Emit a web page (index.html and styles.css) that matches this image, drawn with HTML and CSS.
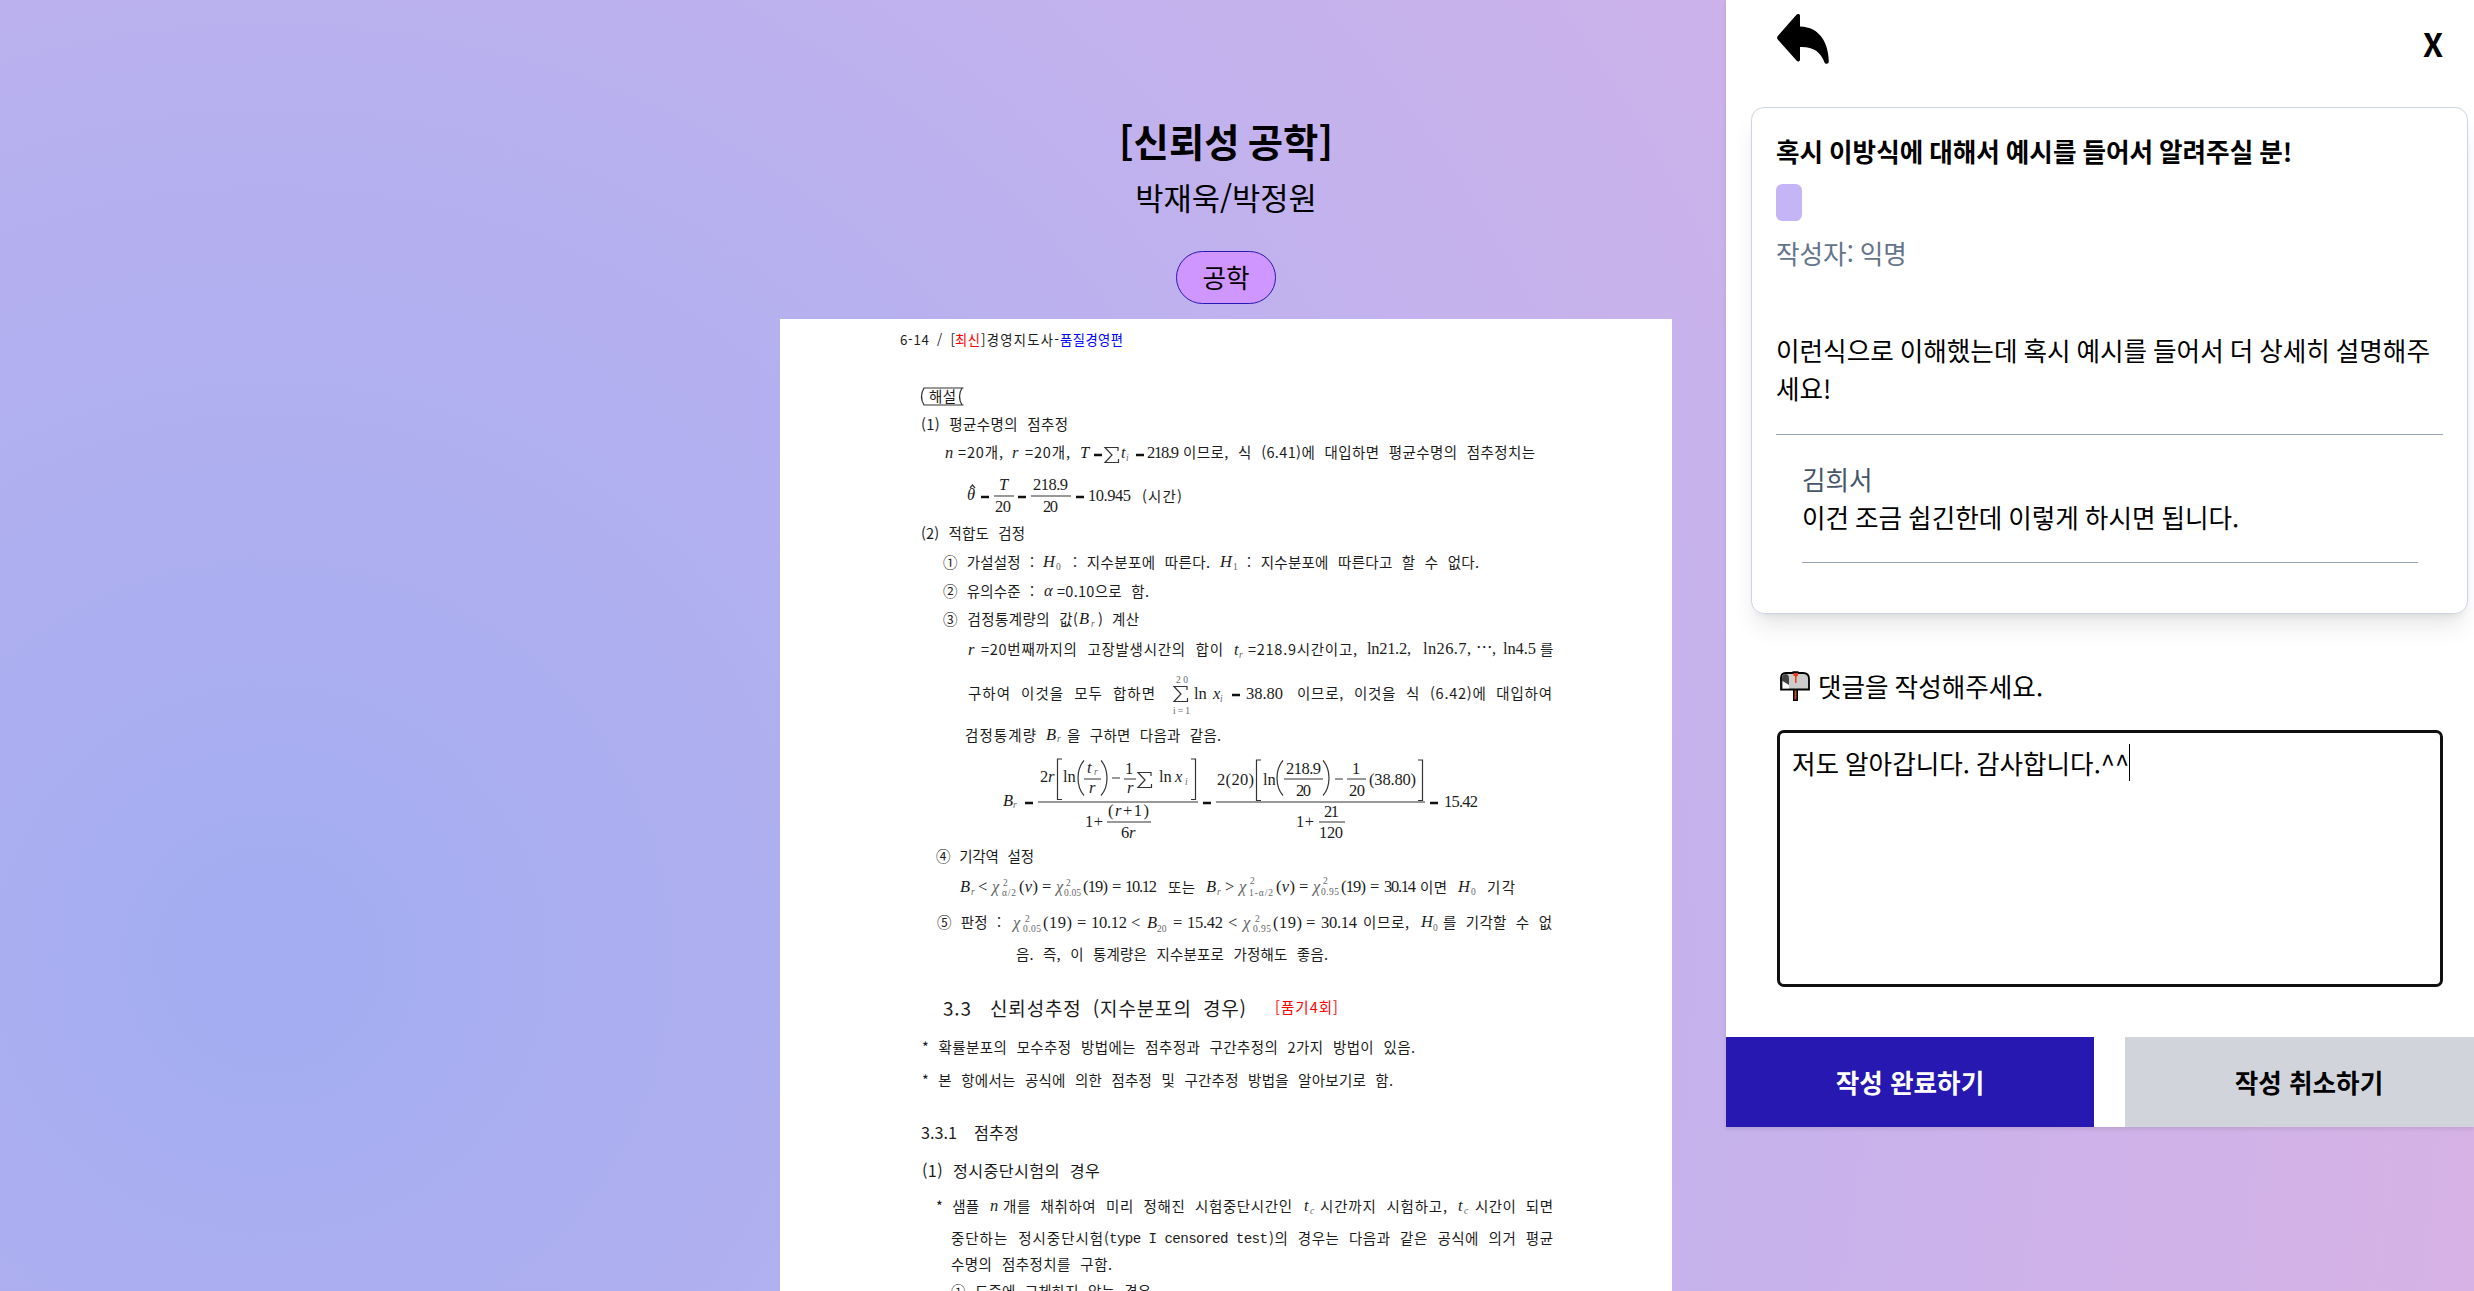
FILE: index.html
```html
<!DOCTYPE html>
<html lang="ko">
<head>
<meta charset="utf-8">
<title>신뢰성 공학</title>
<link rel="stylesheet" href="styles.css">
</head>
<body>
<main class="book">
  <h1 class="book-title">[신뢰성 공학]</h1>
  <p class="book-authors">박재욱/박정원</p>
  <span class="chip">공학</span>
  <svg class="sheet" viewBox="780 320 892 971" role="img" aria-label="6-14">
    <defs>
      <path id="sum" d="M13 3.5V0H0L7 7.5L0 15H13.500V11.500" />
      <path id="brl" d="M5 .5H.5V41H5" />
      <path id="brr" d="M0 .5H4.500V41H0" />
      <path id="pal" d="M7 0C-1 9 -1 26 7 35" />
      <path id="par" d="M0 0C8 9 8 26 0 35" />
    </defs>
    <g class="ko small">
      <text x="900" y="345" textLength="55">6-14 / [</text>
      <text class="red" x="955" y="345" textLength="25">최신</text>
      <text x="981" y="345" textLength="78">]경영지도사-</text>
      <text class="blue" x="1060" y="345" textLength="63">품질경영편</text>
    </g>
    <path class="rule" d="M963.500 388.500H924Q919 397 924 405.500H963.500M962 388.500Q957 397 962 405.500" />
    <g class="ko">
      <text x="929" y="402" textLength="27">해설</text>
      <text x="921" y="430" textLength="147">(1) 평균수명의 점추정</text>
      <text x="958" y="458" textLength="45">=20개,</text>
      <text x="1025" y="458" textLength="45">=20개,</text>
      <text x="1183" y="458" textLength="352">이므로, 식 (6.41)에 대입하면 평균수명의 점추정치는</text>
      <text x="1142" y="502" textLength="40">(시간)</text>
      <text x="921" y="539" textLength="104">(2) 적합도 검정</text>
      <text x="943" y="568" textLength="91">① 가설설정 :</text>
      <text x="1073" y="568" textLength="137">: 지수분포에 따른다.</text>
      <text x="1247" y="568" textLength="232">: 지수분포에 따른다고 할 수 없다.</text>
      <text x="943" y="597" textLength="91">② 유의수준 :</text>
      <text x="1057" y="597" textLength="92">=0.10으로 함.</text>
      <text x="943" y="625" textLength="135">③ 검정통계량의 값(</text>
      <text x="1098" y="625">)</text>
      <text x="1112" y="625" textLength="27">계산</text>
      <text x="981" y="655" textLength="242">=20번째까지의 고장발생시간의 합이</text>
      <text x="1248" y="655" textLength="109">=218.9시간이고,</text>
      <text x="1540" y="655">를</text>
      <text x="968" y="699" textLength="187">구하여 이것을 모두 합하면</text>
      <text x="1297" y="699" textLength="255">이므로, 이것을 식 (6.42)에 대입하여</text>
      <text x="965" y="741" textLength="71">검정통계량</text>
      <text x="1067" y="741" textLength="154">을 구하면 다음과 같음.</text>
      <text x="936" y="862" textLength="98">④ 기각역 설정</text>
      <text x="1168" y="893" textLength="27">또는</text>
      <text x="1420" y="893" textLength="27">이면</text>
      <text x="1487" y="893" textLength="28">기각</text>
      <text x="937" y="928" textLength="64">⑤ 판정 :</text>
      <text x="1363" y="928" textLength="46">이므로,</text>
      <text x="1443" y="928" textLength="109">를 기각할 수 없</text>
      <text x="1016" y="960" textLength="312">음. 즉, 이 통계량은 지수분포로 가정해도 좋음.</text>
      <text class="red" x="1275" y="1013" textLength="63">[품기4회]</text>
      <text x="922" y="1053" textLength="493">* 확률분포의 모수추정 방법에는 점추정과 구간추정의 2가지 방법이 있음.</text>
      <text x="922" y="1086" textLength="471">* 본 항에서는 공식에 의한 점추정 및 구간추정 방법을 알아보기로 함.</text>
      <text x="936" y="1212" textLength="43">* 샘플</text>
      <text x="1003" y="1212" textLength="289">개를 채취하여 미리 정해진 시험중단시간인</text>
      <text x="1320" y="1212" textLength="127">시간까지 시험하고,</text>
      <text x="1475" y="1212" textLength="78">시간이 되면</text>
      <text x="951" y="1244" textLength="158">중단하는 정시중단시험(</text>
      <text class="mono" x="1109" y="1243" textLength="159">type I censored test</text>
      <text x="1269" y="1244" textLength="284">)의 경우는 다음과 같은 공식에 의거 평균</text>
      <text x="951" y="1270" textLength="161">수명의 점추정치를 구함.</text>
      <text x="951" y="1297" textLength="200">① 도중에 교체하지 않는 경우</text>
    </g>
    <g class="ko section">
      <text x="943" y="1016" textLength="28">3.3</text>
      <text x="990" y="1016" textLength="256">신뢰성추정 (지수분포의 경우)</text>
    </g>
    <g class="ko sub-section">
      <text x="921" y="1139" textLength="36">3.3.1</text>
      <text x="974" y="1139" textLength="45">점추정</text>
      <text x="922" y="1177" textLength="178">(1) 정시중단시험의 경우</text>
    </g>
    <g class="math it">
      <text x="945" y="458" textLength="10">n</text>
      <text x="1012" y="458">r</text>
      <text x="1080" y="458">T</text>
      <text x="1121" y="458">t</text>
      <text x="967" y="500">θ</text>
      <text x="999" y="490">T</text>
      <text x="1043" y="567">H</text>
      <text x="1220" y="567">H</text>
      <text x="1044" y="596">α</text>
      <text x="1079" y="624">B</text>
      <text x="968" y="655">r</text>
      <text x="1234" y="655">t</text>
      <text x="1213" y="699">x</text>
      <text x="1046" y="740">B</text>
      <text x="1003" y="806">B</text>
      <text x="1048" y="782">r</text>
      <text x="1087" y="773">t</text>
      <text x="1089" y="793">r</text>
      <text x="1127" y="793">r</text>
      <text x="1175" y="782">x</text>
      <text x="1129" y="838">r</text>
      <text x="960" y="892">B</text>
      <text x="1206" y="892">B</text>
      <text x="1458" y="892">H</text>
      <text x="1147" y="928">B</text>
      <text x="1421" y="927">H</text>
      <text x="990" y="1211">n</text>
      <text x="1304" y="1211">t</text>
      <text x="1458" y="1211">t</text>
      <text class="chi" x="992" y="892">χ</text>
      <text class="chi" x="1056" y="892">χ</text>
      <text class="chi" x="1239" y="892">χ</text>
      <text class="chi" x="1313" y="892">χ</text>
      <text class="chi" x="1013" y="928">χ</text>
      <text class="chi" x="1243" y="928">χ</text>
    </g>
    <g class="math">
      <text x="1147" y="458" textLength="32">218.9</text>
      <text x="995" y="512" textLength="16">20</text>
      <text x="1033" y="490" textLength="35">218.9</text>
      <text x="1043" y="512" textLength="15">20</text>
      <text x="1088" y="501" textLength="43">10.945</text>
      <text x="1367" y="654" textLength="44">ln21.2,</text>
      <text x="1423" y="654" textLength="48">ln26.7,</text>
      <text x="1476" y="654" textLength="20">⋯,</text>
      <text x="1503" y="654" textLength="33">ln4.5</text>
      <text x="1194" y="699">ln</text>
      <text x="1246" y="699" textLength="37">38.80</text>
      <text x="1040" y="782">2</text>
      <text x="1063" y="782">ln</text>
      <text x="1125" y="774">1</text>
      <text x="1159" y="782">ln</text>
      <text x="1085" y="827" textLength="18">1+</text>
      <text x="1108" y="816" textLength="41">(<tspan class="it">r</tspan>+1)</text>
      <text x="1121" y="838">6</text>
      <text x="1217" y="785" textLength="37">2(20)</text>
      <text x="1263" y="785">ln</text>
      <text x="1286" y="774" textLength="35">218.9</text>
      <text x="1296" y="796" textLength="15">20</text>
      <text x="1352" y="774">1</text>
      <text x="1349" y="796" textLength="16">20</text>
      <text x="1369" y="785" textLength="47">(38.80)</text>
      <text x="1444" y="807" textLength="34">15.42</text>
      <text x="1296" y="827" textLength="18">1+</text>
      <text x="1324" y="817" textLength="15">21</text>
      <text x="1319" y="838" textLength="24">120</text>
      <text x="978" y="892">&lt;</text>
      <text x="1019" y="892" textLength="19">(<tspan class="it">ν</tspan>)</text>
      <text x="1042" y="892">=</text>
      <text x="1083" y="892" textLength="25">(19)</text>
      <text x="1112" y="892">=</text>
      <text x="1125" y="892" textLength="32">10.12</text>
      <text x="1225" y="892">&gt;</text>
      <text x="1276" y="892" textLength="19">(<tspan class="it">ν</tspan>)</text>
      <text x="1299" y="892">=</text>
      <text x="1341" y="892" textLength="25">(19)</text>
      <text x="1370" y="892">=</text>
      <text x="1384" y="892" textLength="32">30.14</text>
      <text x="1043" y="928" textLength="29">(19)</text>
      <text x="1077" y="928">=</text>
      <text x="1091" y="928" textLength="36">10.12</text>
      <text x="1131" y="928">&lt;</text>
      <text x="1173" y="928">=</text>
      <text x="1187" y="928" textLength="36">15.42</text>
      <text x="1228" y="928">&lt;</text>
      <text x="1273" y="928" textLength="29">(19)</text>
      <text x="1306" y="928">=</text>
      <text x="1321" y="928" textLength="36">30.14</text>
    </g>
    <g class="math script">
      <text class="it" x="1126" y="461">i</text>
      <text x="1056" y="570">0</text>
      <text x="1233" y="570">1</text>
      <text class="it" x="1091" y="627">r</text>
      <text class="it" x="1239" y="658">r</text>
      <text x="1176" y="683" textLength="12">20</text>
      <text x="1173" y="714" textLength="17">i=1</text>
      <text class="it" x="1220" y="702">i</text>
      <text class="it" x="1057" y="742">r</text>
      <text class="it" x="1013" y="808">r</text>
      <text class="it" x="1094" y="775">r</text>
      <text class="it" x="1185" y="785">i</text>
      <text class="it" x="971" y="895">r</text>
      <text x="1003" y="886">2</text>
      <text x="1002" y="896" textLength="14">α/2</text>
      <text x="1066" y="886">2</text>
      <text x="1064" y="896" textLength="17">0.05</text>
      <text class="it" x="1217" y="895">r</text>
      <text x="1250" y="884">2</text>
      <text x="1249" y="896" textLength="24">1-α/2</text>
      <text x="1323" y="884">2</text>
      <text x="1321" y="895" textLength="18">0.95</text>
      <text x="1471" y="895">0</text>
      <text x="1025" y="922">2</text>
      <text x="1023" y="932" textLength="18">0.05</text>
      <text x="1157" y="932">20</text>
      <text x="1255" y="922">2</text>
      <text x="1253" y="932" textLength="18">0.95</text>
      <text x="1433" y="931">0</text>
      <text class="it" x="1310" y="1214">c</text>
      <text class="it" x="1464" y="1214">c</text>
    </g>
    <g class="thick">
      <path d="M1094 455.500h8M1136 455.500h8M981 497.500h8M1018 497.500h8M1076 497.500h8M1232 695.500h8M1025 803.500h8M1203 803.500h8M1430 803.500h8" />
    </g>
    <g class="rule">
      <path d="M970 488.500l2.500 -3l2.500 3" />
      <path d="M994 496.500h20M1031 496.500h40M1084 779.500h17M1124 779.500h12M1107 822.500h44M1284 779.500h39M1347 779.500h19M1319 822.500h26M1112 778.500h8M1335 779.500h8M1038 802.500h160M1216 802.500h209" />
      <use href="#sum" x="1105" y="448" />
      <use href="#sum" x="1174" y="687" />
      <use href="#sum" x="1138" y="773" />
      <use href="#brl" x="1057" y="759" />
      <use href="#brr" x="1191" y="759" />
      <use href="#brl" x="1256" y="760" />
      <use href="#brr" x="1418" y="760" />
      <use href="#pal" x="1077" y="761" />
      <use href="#par" x="1101" y="761" />
      <use href="#pal" x="1276" y="761" />
      <use href="#par" x="1323" y="761" />
    </g>
  </svg>
</main>

<aside class="panel">
  <header class="panel-head">
    <button class="icon-button" aria-label="뒤로">
      <svg class="back" viewBox="0 0 52 50"><path d="M23 1.800V12.500C43 13 51.500 29 51.800 47.500C51.800 50 48.500 50.500 47.500 48.500C43.500 37.500 36 32.500 23 33V45.500C23 47.600 21 48.300 19.700 46.800L.8 25.500C-.2 24.300 -.2 23.100 .8 21.900L19.700 .6C21 -.7 23 0 23 1.800Z" /></svg>
    </button>
    <button class="close">X</button>
  </header>
  <article class="card">
    <h2 class="card-title">혹시 이방식에 대해서 예시를 들어서 알려주실 분!</h2>
    <span class="badge"></span>
    <p class="author">작성자: 익명</p>
    <p class="content">이런식으로 이해했는데 혹시 예시를 들어서 더 상세히 설명해주세요!</p>
    <section class="reply">
      <p class="reply-name">김희서</p>
      <p>이건 조금 쉽긴한데 이렇게 하시면 됩니다.</p>
    </section>
  </article>
  <div class="write">
    <p class="write-label">
      <svg class="mailbox" viewBox="0 0 30 31"><path d="M15.500 18V30" stroke="#000" stroke-width="5" /><path d="M15.500 18V28.500" stroke="#b5532a" stroke-width="2" /><path d="M5.500 2H23Q29 2 29 8V18.500H1V7Q1 2 5.500 2Z" fill="#ccc" stroke="#000" stroke-width="1.800" /><path d="M2 18V7.500Q2 3 5.500 3Q9 3 9 7.500V18Z" fill="#444" /><path d="M2.500 17.500V10L9 14V17.500Z" fill="#fff" /><path d="M12.500 1H18.500" stroke="#000" stroke-width="1.500" /><path d="M13.500 2H18V4.500L16.500 6V12H15V5H13.500Z" fill="#f03a17" /></svg>
      <span>댓글을 작성해주세요.</span>
    </p>
    <div class="field" role="textbox"><span>저도 알아갑니다. 감사합니다.^^</span><i class="caret"></i></div>
  </div>
  <footer class="actions">
    <button class="submit">작성 완료하기</button>
    <button class="cancel">작성 취소하기</button>
  </footer>
</aside>
</body>
</html>
```
FILE: styles.css
```css
* { box-sizing: border-box; }

html { font-size: 25.6px; }

body {
  margin: 0;
  height: 1291px;
  overflow: hidden;
  position: relative;
  font-family: "Noto Sans CJK KR", sans-serif;
  font-size: 1rem;
  line-height: 1.5;
  color: #000;
  background: radial-gradient(circle at 270px 960px, #a3adf2 0, #b4b0ef 750px, #c3b2ed 1300px, #d8b2e5 2300px);
}

h1, h2, p { margin: 0; }

button {
  font: inherit;
  color: inherit;
  border: 0;
  padding: 0;
  background: none;
}

/* Book page */
.book {
  width: 2452px;
  padding-top: 115px;
  display: flex;
  flex-direction: column;
  align-items: center;
}

.book-title {
  font-size: 1.5rem;
  line-height: 51px;
  font-weight: 700;
  word-spacing: -2.5px;
}

.book-authors {
  margin-top: 8px;
  font-size: 1.2rem;
  line-height: 46px;
}

.chip {
  margin-top: 31px;
  padding: .25rem 1rem;
  height: 53px;
  border: 1px solid #2618b1;
  border-radius: 1.04rem;
  background: #d096ff;
}

.sheet {
  display: block;
  flex: none;
  width: 892px;
  height: 972px;
  margin-top: 15px;
  background: #fff;
}

.sheet text { fill: #1c1c1c; }
.sheet .red { fill: #f00; }
.sheet .blue { fill: #00f; }
.ko { font-size: 14.5px; word-spacing: 5px; }
.ko.small { font-size: 13.3px; word-spacing: 3px; }
.ko.section { font-size: 19px; }
.ko.sub-section { font-size: 16.2px; }
.sheet .mono { font-family: "Liberation Mono", monospace; font-size: 14.2px; word-spacing: 0; }
.math { font-family: "Liberation Serif", serif; font-size: 16.5px; }
.it { font-style: italic; }
.sheet .chi { fill: #666; }
.math.script { font-size: 9.5px; }
.sheet .script text { fill: #666; }
.rule { fill: none; stroke: #333; stroke-width: 1.2; }
.thick { stroke: #111; stroke-width: 2.6; }

/* Question panel */
.panel {
  position: absolute;
  top: 0;
  right: 0;
  width: 748px;
  height: 1127px;
  display: flex;
  flex-direction: column;
  overflow: hidden;
  background: #fff;
  box-shadow: 0 2px 4px rgba(0, 0, 0, .1);
  word-spacing: -1.2px;
}

.panel-head {
  flex: none;
  height: 107px;
  padding: 14px 31px 0 51px;
  display: flex;
  justify-content: space-between;
  align-items: flex-start;
}

.icon-button { height: 50px; }
.back { display: block; width: 52px; height: 50px; }

.close {
  margin-top: 6px;
  font-size: 1.25rem;
  line-height: 46px;
  font-weight: 700;
}

.card {
  flex: none;
  width: 717px;
  height: 507px;
  margin-left: 25px;
  padding: 24px 24px 0;
  border: 1px solid #cbd5e1;
  border-radius: .5rem;
  box-shadow: 0 16px 24px -5px rgba(0, 0, 0, .1), 0 6px 10px -6px rgba(0, 0, 0, .1);
}

.card-title { font-size: 1rem; font-weight: 700; }

.badge {
  display: block;
  width: 26px;
  height: 37px;
  margin: 14px 0 13px;
  border-radius: .25rem;
  background: #c5b4f6;
}

.author { color: #64748b; }

.content {
  margin-top: 58px;
  padding-bottom: 26px;
  border-bottom: 1px solid #94a3b8;
  word-break: break-all;
}

.reply {
  margin: 25px 25px 0 26px;
  padding-bottom: 26px;
  border-bottom: 1px solid #94a3b8;
}

.reply-name { color: #475569; }

.write { flex: none; height: 423px; padding: 53px 31px 0 51px; }

.write-label {
  display: flex;
  align-items: center;
  gap: 8px;
  padding-left: 3px;
}

.mailbox { width: 30px; height: 31px; }

.field {
  height: 257px;
  margin-top: 25px;
  padding: 11px 12px;
  display: flex;
  align-items: flex-start;
  border: 3px solid #101010;
  border-radius: 7px;
}

.caret { width: 1px; height: 37px; background: #000; }

.actions { display: flex; gap: 31px; height: 90px; }

.actions button {
  flex: none;
  width: 368px;
  height: 90px;
  font-weight: 700;
}

.actions .submit { background: #2618b1; color: #fff; }
.actions .cancel { background: #d1d5db; }
```
